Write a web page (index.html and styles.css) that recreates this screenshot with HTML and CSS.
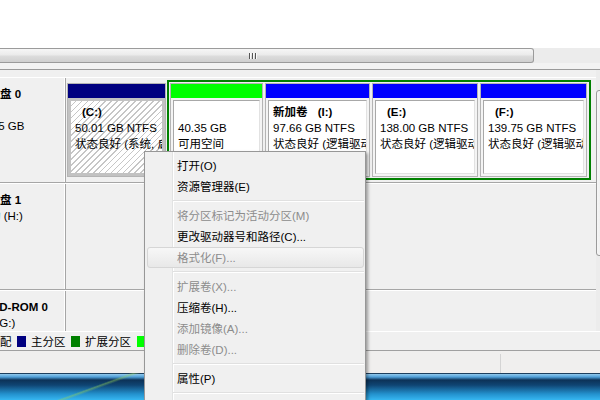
FILE: index.html
```html
<!DOCTYPE html>
<html lang="zh-CN">
<head>
<meta charset="utf-8">
<title>磁盘管理</title>
<link rel="stylesheet" href="styles.css">
</head>
<body>
<div class="screen">
  <div class="listview"></div>
  <div class="hscroll">
    <div class="hthumb"><span class="grip"><i></i><i></i><i></i></span></div>
    <div class="htrack"></div>
  </div>
  <div class="split"></div>
  <div class="graph">
    <div class="disks">
      <div class="row row0">
        <div class="label">
          <div class="ln b in-disk">磁盘 0</div>
          <div class="ln in-hide">基本</div>
          <div class="ln in-size">465.75 GB</div>
          <div class="ln in-hide">联机</div>
        </div>
        <div class="area">
          <div class="part sel c">
            <div class="bar navy"></div>
            <div class="body"><div class="inner">
              <div class="ln b"><span class="drv">(C:)</span></div>
              <div class="ln">50.01 GB NTFS</div>
              <div class="ln">状态良好 (系统, 启动, 页面文件, 活动, 故障转储, 主分区)</div>
            </div></div>
          </div>
          <div class="ext">
            <div class="part w-free">
              <div class="bar lime"></div>
              <div class="body"><div class="inner">
                <div class="ln">&nbsp;</div>
                <div class="ln">40.35 GB</div>
                <div class="ln">可用空间</div>
              </div></div>
            </div>
            <div class="part w-i">
              <div class="bar blue"></div>
              <div class="body"><div class="inner">
                <div class="ln b">新加卷 <span class="drv">(I:)</span></div>
                <div class="ln">97.66 GB NTFS</div>
                <div class="ln">状态良好 (逻辑驱动器)</div>
              </div></div>
            </div>
            <div class="part w-e">
              <div class="bar blue"></div>
              <div class="body"><div class="inner">
                <div class="ln b"><span class="drv">(E:)</span></div>
                <div class="ln">138.00 GB NTFS</div>
                <div class="ln">状态良好 (逻辑驱动器)</div>
              </div></div>
            </div>
            <div class="part w-f">
              <div class="bar blue"></div>
              <div class="body"><div class="inner">
                <div class="ln b"><span class="drv">(F:)</span></div>
                <div class="ln">139.75 GB NTFS</div>
                <div class="ln">状态良好 (逻辑驱动器)</div>
              </div></div>
            </div>
          </div>
        </div>
      </div>
      <div class="row row1">
        <div class="label">
          <div class="ln b in-disk">磁盘 1</div>
          <div class="ln in-rem">可移动 (H:)</div>
          <div class="ln in-hide">无媒体</div>
        </div>
        <div class="area"></div>
      </div>
      <div class="row row2">
        <div class="label">
          <div class="ln b in-cd">CD-ROM 0</div>
          <div class="ln in-dvd">DVD (G:)</div>
        </div>
        <div class="area"></div>
      </div>
    </div>
    <div class="vscroll"><div class="vthumb"></div></div>
  </div>
  <div class="legend">
    <span class="lg-first">未分配</span>
    <span class="sw navy"></span><span>主分区</span>
    <span class="sw green"></span><span>扩展分区</span>
    <span class="sw lime"></span><span>可用空间</span>
    <span class="sw blue"></span><span>逻辑驱动器</span>
  </div>
  <div class="status"><div class="st-main"></div><div class="st-rest"></div></div>
  <div class="taskbar"></div>

  <div class="menu">
    <div class="mi">打开(O)</div>
    <div class="mi">资源管理器(E)</div>
    <div class="sep"></div>
    <div class="mi dis">将分区标记为活动分区(M)</div>
    <div class="mi">更改驱动器号和路径(C)...</div>
    <div class="mi dis hot">格式化(F)...</div>
    <div class="sep"></div>
    <div class="mi dis">扩展卷(X)...</div>
    <div class="mi">压缩卷(H)...</div>
    <div class="mi dis">添加镜像(A)...</div>
    <div class="mi dis">删除卷(D)...</div>
    <div class="sep"></div>
    <div class="mi">属性(P)</div>
    <div class="sep"></div>
    <div class="mi">帮助(H)</div>
  </div>
</div>
</body>
</html>
```

FILE: styles.css
```css
html, body {
  margin: 0;
  padding: 0;
}
body {
  width: 600px;
  height: 400px;
  overflow: hidden;
  background: #fff;
  font-family: "Liberation Sans", "Noto Sans CJK SC", sans-serif;
  font-size: 11.5px;
  color: #000;
}
.screen {
  position: relative;
  width: 600px;
  height: 400px;
  overflow: hidden;
}

/* top list + horizontal scrollbar */
.listview { height: 48px; background: #fff; }
.hscroll {
  height: 15px;
  display: flex;
  background: #ececec;
}
.hthumb {
  flex: none;
  width: 562px;
  margin-left: -28px;
  box-sizing: border-box;
  border: 1px solid #9b9b9b;
  border-left: 0;
  border-radius: 0 3px 3px 0;
  background: linear-gradient(#f6f6f6, #ebebeb 45%, #dcdcdc 55%, #d0d0d0);
  display: flex;
  justify-content: center;
  align-items: center;
}
.grip { display: flex; }
.grip i {
  display: block;
  width: 1px;
  height: 6px;
  margin: 0 1px;
  background: #555;
  box-shadow: 1px 0 0 #fbfbfb;
}
.htrack { flex: 1; }
.split {
  height: 6px;
  background: #f3f3f3;
  border-bottom: 1px solid #9a9a9a;
}

/* graphical disk view */
.graph {
  display: flex;
  width: 613px;
  height: 261px;
  overflow: hidden;
  background: #f0f0f0;
}
.disks {
  width: 596px;
  flex: none;
  padding-top: 7px;
  box-sizing: border-box;
}
.row {
  display: flex;
  border-top: 1px solid #fff;
  border-bottom: 1px solid #a6a6a6;
}
.row0 { height: 104px; }
.row1 { height: 105px; }
.row2 { height: 80px; }
.label {
  width: 65px;
  flex: none;
  border-right: 1px solid #fff;
  overflow: hidden;
  padding-top: 8px;
  box-sizing: border-box;
  white-space: nowrap;
}
.ln { line-height: 16px; white-space: nowrap; }
.b { font-weight: bold; }
.in-disk { margin-left: -11.5px; }
.in-hide { margin-left: -60px; }
.in-size { margin-left: -30.5px; }
.in-rem { margin-left: -34px; }
.in-cd { margin-left: -9px; }
.in-dvd { margin-left: -32px; }

.area {
  flex: 1;
  border-left: 1px solid #a6a6a6;
  display: flex;
  align-items: flex-start;
  padding: 2px 0 0 1px;
}
.part {
  display: flex;
  flex-direction: column;
  flex: none;
  box-sizing: border-box;
  height: 94px;
  border: 1px solid #b4b4b4;
  background: #f4f4f4;
}
.c { width: 99px; margin-top: 3px; }
.w-free { width: 93px; }
.w-i { width: 105px; }
.w-e { width: 106px; }
.w-f { width: 107px; }
.ext {
  display: flex;
  gap: 2px;
  height: 100px;
  box-sizing: border-box;
  border: 2px solid #008000;
  padding: 1px 2px 1px 1px;
  margin-left: 1px;
}
.bar { height: 14px; flex: none; }
.navy { background: #000080; }
.lime { background: #00ff00; }
.blue { background: #0000ff; }
.green { background: #008000; }
.body {
  flex: 1;
  min-height: 0;
  display: flex;
  padding: 2px;
}
.inner {
  flex: 1;
  min-width: 0;
  background: #fff;
  border: 1px solid;
  border-color: #a8a8a8 #e2e2e2 #e2e2e2 #a8a8a8;
  padding: 3px 0 0 4px;
  overflow: hidden;
}
.sel .body {
  padding: 3px;
  background: #c2c2c2;
}
.sel .inner {
  border: 0;
  padding: 3px 0 0 4px;
  background: repeating-linear-gradient(135deg, #fff 0, #fff 3px, #c6c6c6 3px, #c6c6c6 4.2px);
}
.drv { padding-left: 7px; }

.vscroll {
  width: 17px;
  flex: none;
  padding-top: 20px;
  box-sizing: border-box;
  background: #ececec;
}
.vthumb {
  height: 166px;
  box-sizing: border-box;
  border: 1px solid #9b9b9b;
  border-radius: 3px;
  background: linear-gradient(to right, #f6f6f6, #dcdcdc);
}

/* legend */
.legend {
  display: flex;
  align-items: center;
  height: 18px;
  border-top: 1px solid #fff;
  border-bottom: 1px solid #a0a0a0;
  background: #f0f0f0;
  white-space: nowrap;
}
.lg-first { margin-left: -23px; }
.sw {
  flex: none;
  width: 9px;
  height: 11px;
  margin: 0 5px 0 5.5px;
}

/* status bar */
.status {
  display: flex;
  height: 22px;
  background: #f0efee;
}
.st-main {
  width: 500px;
  margin-top: 3px;
  border-right: 1px solid #d4d4d4;
}
.st-rest { flex: 1; }

/* taskbar */
.taskbar {
  height: 27px;
  background:
    linear-gradient(160deg, transparent 58%, rgba(150, 210, 90, 0.45) 60%, transparent 63%) 0 0 / 150px 100% no-repeat,
    linear-gradient(#1d3f5e 0, #1d3f5e 1px, #92c9ec 1px, #4f9fd8 4px, #0c3257 7px, #0f4472 12px, #2391cd 21px, #36b7f1 27px);
}

/* context menu */
.menu {
  position: absolute;
  left: 144px;
  top: 151px;
  width: 217px;
  padding: 3px 1px 0 2px;
  border: 1px solid #979797;
  background:
    linear-gradient(to right, transparent 27px, #e2e3e3 27px, #e2e3e3 28px, #fff 28px, #fff 29px, transparent 29px),
    #f0f0f0;
  box-shadow: 2px 2px 3px rgba(0, 0, 0, 0.35);
  z-index: 10;
}
.mi {
  height: 21px;
  line-height: 21px;
  box-sizing: border-box;
  border: 1px solid transparent;
  padding-left: 29px;
  white-space: nowrap;
  color: #000;
}
.mi.dis { color: #8c8c8c; }
.mi.hot {
  border-color: #d6d6d6;
  border-radius: 3px;
  background: linear-gradient(#f7f7f7, #e8e8e8);
}
.sep {
  height: 8px;
  box-sizing: border-box;
  margin-left: 26px;
  padding-top: 3px;
}
.sep::before {
  content: "";
  display: block;
  height: 1px;
  background: #e0e0e0;
  border-bottom: 1px solid #fff;
}
```
